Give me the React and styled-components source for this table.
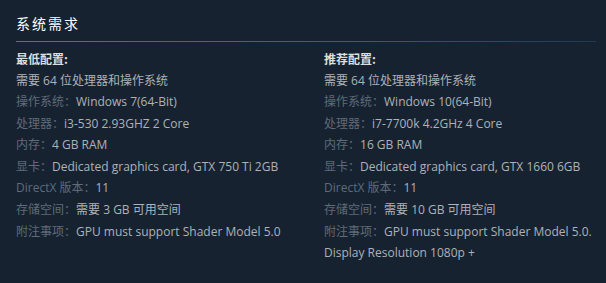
import React from "react";
import styled, { createGlobalStyle } from "styled-components";

const Global = createGlobalStyle`
  html, body { margin: 0; padding: 0; background: #172231; }
  body { font-family: "Open Sans", Arial, "Noto Sans CJK SC", sans-serif; }
`;

const Page = styled.div`
  width: 606px;
  height: 283px;
  box-sizing: border-box;
  padding: 13px 10px 0 16px;
  background: #172231;
`;

const Title = styled.h2`
  margin: 0;
  padding: 2px 0 9px;
  font-family: "Noto Sans CJK SC", sans-serif;
  font-size: 14px;
  line-height: 17px;
  font-weight: 400;
  letter-spacing: 2px;
  color: #ffffff;
  border-bottom: 1px solid;
  border-image: linear-gradient(to right, #3f7ba0 0%, #2f5e7e 60%, #1e3a52 100%) 1;
`;

const Columns = styled.div`
  display: grid;
  grid-template-columns: 272px 272px;
  column-gap: 36px;
  padding-top: 8px;
`;

const Col = styled.div`
  font-size: 12px;
  line-height: 21.6px;
  color: #acb2b8;
`;

const Heading = styled.div`
  font-family: "Noto Sans CJK SC", sans-serif;
  font-weight: 700;
  line-height: 18px;
  color: #dcdedf;
  margin-bottom: 1.5px;
`;

const List = styled.ul`
  list-style: none;
  margin: 0;
  padding: 0;
`;

const Item = styled.li`
  margin: 0;
  font-family: "Open Sans", "Noto Sans CJK SC", sans-serif;
`;

const Label = styled.span`
  color: #5f6b78;
`;

const Row = ({ label, children }) => (
  <Item>
    {label && <Label>{label}：</Label>}
    {children}
  </Item>
);

const minimum = [
  ["操作系统", "Windows 7(64-Bit)"],
  ["处理器", "i3-530 2.93GHZ 2 Core"],
  ["内存", "4 GB RAM"],
  ["显卡", "Dedicated graphics card, GTX 750 Ti 2GB"],
  ["DirectX 版本", "11"],
  ["存储空间", "需要 3 GB 可用空间"],
  ["附注事项", "GPU must support Shader Model 5.0"],
];

const recommended = [
  ["操作系统", "Windows 10(64-Bit)"],
  ["处理器", "i7-7700k 4.2GHz 4 Core"],
  ["内存", "16 GB RAM"],
  ["显卡", "Dedicated graphics card, GTX 1660 6GB"],
  ["DirectX 版本", "11"],
  ["存储空间", "需要 10 GB 可用空间"],
  ["附注事项", "GPU must support Shader Model 5.0. Display Resolution 1080p +"],
];

const Column = ({ title, rows }) => (
  <Col>
    <Heading>{title}:</Heading>
    <List>
      <Row>需要 64 位处理器和操作系统</Row>
      {rows.map(([l, v]) => (
        <Row key={l} label={l}>
          {v}
        </Row>
      ))}
    </List>
  </Col>
);

export default function App() {
  return (
    <Page>
      <Global />
      <Title>系统需求</Title>
      <Columns>
        <Column title="最低配置" rows={minimum} />
        <Column title="推荐配置" rows={recommended} />
      </Columns>
    </Page>
  );
}
